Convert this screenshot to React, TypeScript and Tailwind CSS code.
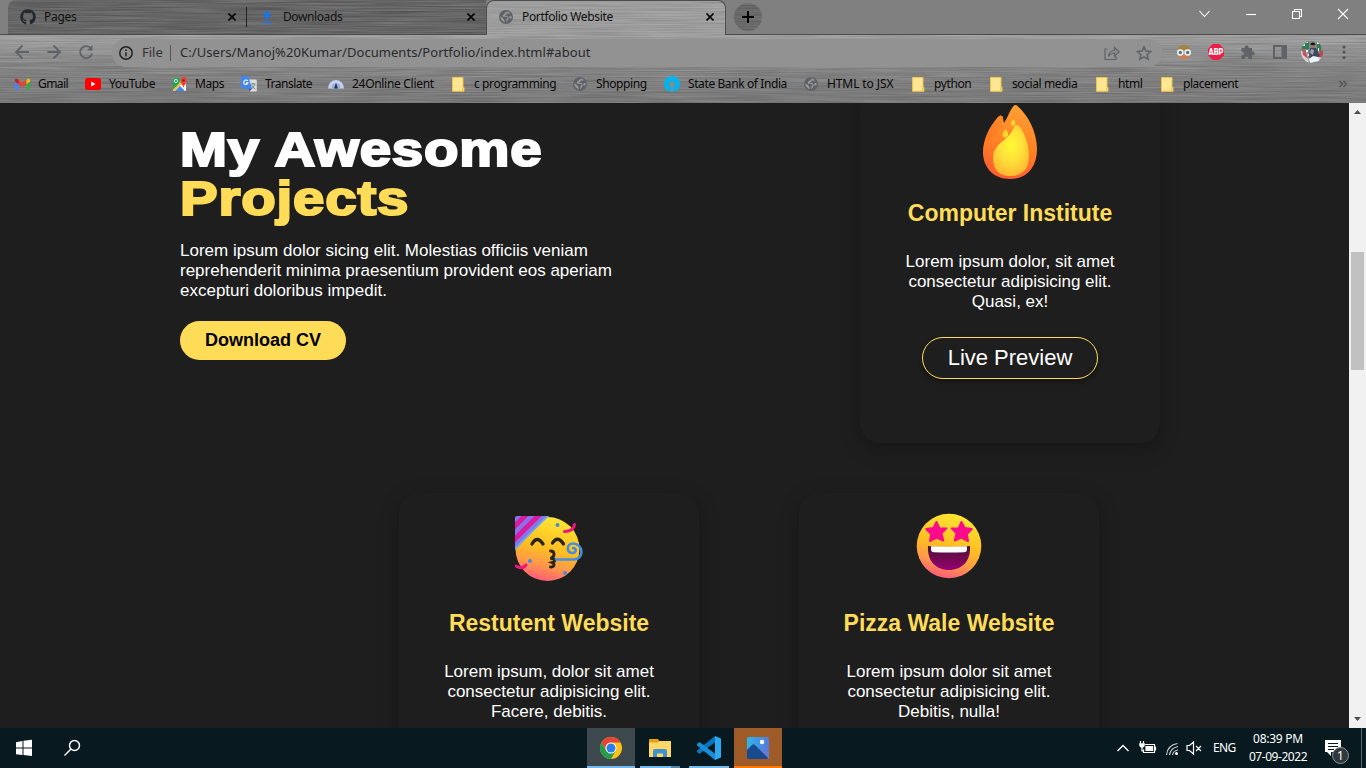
import React from "react";
import { FaGithub } from "react-icons/fa";

function Metal({ id, seed, strength = 0.5 }: { id: string; seed: number; strength?: number }) {
  return (
    <svg className="pointer-events-none absolute inset-0 h-full w-full" aria-hidden="true">
      <filter id={id} x="0" y="0" width="100%" height="100%" colorInterpolationFilters="sRGB">
        <feTurbulence type="fractalNoise" baseFrequency="0.014 0.8" numOctaves="2" seed={seed} />
        <feColorMatrix values="1 0 0 0 0  1 0 0 0 0  1 0 0 0 0  0 0 0 0 1" />
      </filter>
      <rect width="100%" height="100%" filter={`url(#${id})`} opacity={strength} />
    </svg>
  );
}

function Globe({ size = 14 }: { size?: number }) {
  return (
    <svg width={size} height={size} viewBox="0 0 14 14">
      <circle cx="7" cy="7" r="7" fill="#5f6368" />
      <path d="M7.500 1.300 6 3.300 3.800 5.200l.4 1.500 3.300.1 1.200 1.500-1.200 1.300-.3 2.900C3.500 12 1.300 9.500 1.400 6.300L4 8.200 5.300 10l.5 2.200 1.400.3 1.600-2.200 1-1.900L8.300 6 5.500 5.600 7.800 4z" fill="#9a9b9c" />
      <path d="M8.300 1.500 8 3.200q1.800 1.500 2.800-.4zM12.500 6.200q-2.500-.8-2.300 1.300 1 1.500 2.300.8z" fill="#9a9b9c" />
    </svg>
  );
}

function Folder() {
  return (
    <svg width="13" height="15" viewBox="0 0 13 15">
      <path d="M.5.5h10.500v9.800h1v4H.5z" fill="#ffe693" stroke="#efc24d" />
      <path d="M10.500 10.500v3.500" stroke="#efc24d" />
    </svg>
  );
}

function Gmail() {
  return (
    <svg width="15" height="12" viewBox="0 0 15 12">
      <path d="M0 2v9q0 1 1 1h2.500V5z" fill="#4285f4" />
      <path d="M11.500 5v7H14q1 0 1-1V2z" fill="#34a853" />
      <path d="M3.500 1.800v4.500l4 3 4-3V1.800l-4 3z" fill="#ea4335" />
      <path d="M0 2v1.600l3.500 2.700V1.800L2.500 1Q.5-.2 0 2z" fill="#c5221f" />
      <path d="M15 2v1.600l-3.500 2.700V1.800l1-.8Q14.500-.2 15 2z" fill="#fbbc04" />
    </svg>
  );
}

function YouTube() {
  return (
    <svg width="16" height="12" viewBox="0 0 16 12">
      <rect width="16" height="12" rx="2.500" fill="#f00" />
      <path d="M6.300 3.500v5l4.200-2.500z" fill="#fff" />
    </svg>
  );
}

function Maps() {
  return (
    <svg width="16" height="15" viewBox="0 0 16 15">
      <rect x="1" y="1" width="13" height="13" rx="1.500" fill="#e9eef0" />
      <path d="M1 2.500Q1 1 2.500 1H9L7 8l-6 5z" fill="#26a65b" />
      <path d="M1 12.500 8.500 5l1.500 1.500L2.500 14Q1 14 1 12.500z" fill="#fbc12d" />
      <path d="m3 14 5-5 5 5z" fill="#4285f4" />
      <path d="m8.500 8.500 1.500-1.500 4 4v2q0 1-.8 1z" fill="#fff" />
      <circle cx="4" cy="4" r="1.600" fill="none" stroke="#d6f3e1" strokeWidth=".9" />
      <path d="M11.500 11C11 7.500 8.200 6.500 8.200 3.400a3.300 3.300 0 0 1 6.600 0c0 3.100-2.800 4.100-3.300 7.600z" fill="#ea4335" />
      <circle cx="11.500" cy="3.500" r="1.200" fill="#901b16" />
    </svg>
  );
}

function Translate() {
  return (
    <svg width="16" height="16" viewBox="0 0 16 16">
      <path d="M6 3.500h8.500q1.300 0 1.300 1.200v9.500q0 1.300-1.300 1.300H9z" fill="#dcdcdc" />
      <path d="M9.500 8h5M12 6.800V8m1.800 0c-.6 2.500-2 4-4 5m.8-4c.7 1.800 2 3.200 3.800 4" stroke="#667d86" strokeWidth=".9" fill="none" />
      <path d="M1.300 0H7l4 12.500H1.300Q0 12.500 0 11.300v-10Q0 0 1.300 0z" fill="#4285f4" />
      <path d="M7.500 12.500H11l-2.300 3z" fill="#2b5fc0" />
      <path d="M6.700 5a2.200 2.200 0 1 0 .3 1.900H4.900" stroke="#fff" strokeWidth="1.100" fill="none" />
    </svg>
  );
}

function Online() {
  return (
    <svg width="16" height="9" viewBox="0 0 16 9">
      <path d="M0 8.500A8 8.500 0 0 1 16 8.500z" fill="#c5cff0" />
      <path d="M3.500 8.500a4.500 5.500 0 0 1 9 0z" fill="#9eacd8" />
      <path d="m8 3 2 5.500H6z" fill="#26335f" />
    </svg>
  );
}

function Sbi() {
  return (
    <svg width="16" height="16" viewBox="0 0 16 16">
      <circle cx="8" cy="8" r="8" fill="#00b5ef" />
      <circle cx="8" cy="8" r="2.700" fill="#8a8a8a" />
      <path d="M7 8h2v8H7z" fill="#8a8a8a" />
    </svg>
  );
}

const bookmarks: { w: string; iw: string; icon: React.ReactNode; label: string; track: string }[] = [
  { w: "w-[70px]", iw: "w-[23px]", icon: <Gmail />, label: "Gmail", track: "tracking-[-0.6px]" },
  { w: "w-[87px]", iw: "w-[24px]", icon: <YouTube />, label: "YouTube", track: "tracking-[-0.35px]" },
  { w: "w-[69px]", iw: "w-[23px]", icon: <Maps />, label: "Maps", track: "tracking-[-0.4px]" },
  { w: "w-[87px]", iw: "w-[24px]", icon: <Translate />, label: "Translate", track: "tracking-[-0.5px]" },
  { w: "w-[124px]", iw: "w-[24px]", icon: <Online />, label: "24Online Client", track: "tracking-[-0.3px]" },
  { w: "w-[121px]", iw: "w-[22px]", icon: <Folder />, label: "c programming", track: "tracking-[-0.4px]" },
  { w: "w-[91px]", iw: "w-[23px]", icon: <Globe />, label: "Shopping", track: "tracking-[-0.4px]" },
  { w: "w-[140px]", iw: "w-[24px]", icon: <Sbi />, label: "State Bank of India", track: "tracking-[-0.4px]" },
  { w: "w-[108px]", iw: "w-[23px]", icon: <Globe />, label: "HTML to JSX", track: "tracking-[-0.1px]" },
  { w: "w-[78px]", iw: "w-[22px]", icon: <Folder />, label: "python", track: "tracking-[-0.4px]" },
  { w: "w-[106px]", iw: "w-[22px]", icon: <Folder />, label: "social media", track: "tracking-[-0.4px]" },
  { w: "w-[65px]", iw: "w-[22px]", icon: <Folder />, label: "html", track: "tracking-[-0.4px]" },
  { w: "w-[90px]", iw: "w-[22px]", icon: <Folder />, label: "placement", track: "tracking-[-0.5px]" },
];

function Close() {
  return (
    <svg width="8" height="8" viewBox="0 0 8 8" className="shrink-0">
      <path d="m.5.5 7 7m0-7-7 7" stroke="#000" strokeWidth="1.600" />
    </svg>
  );
}

function TabStrip() {
  return (
    <div className="relative flex h-[34px] shrink-0 bg-[#808080] text-[12px] tracking-[-0.3px] text-[#111]">
      <div className="w-2 rounded-br-md" />
      <div className="relative flex w-[478px] overflow-hidden rounded-tl-lg bg-[#606060]">
        <Metal id="m-tabs" seed={4} strength={0.2} />
        <div className="relative flex w-[239px] shrink-0 items-center pl-3">
          <FaGithub size={16} color="#24292f" />
          <span className="ml-2 flex-1">Pages</span>
          <Close />
          <div className="ml-[10px] h-5 w-px bg-[#222]" />
        </div>
        <div className="relative flex w-[240px] shrink-0 items-center pl-[15px]">
          <svg width="10" height="12" viewBox="0 0 10 12">
            <path d="M3 0h4v4h2.500L5 8.500.5 4H3zM0 10.500h10V12H0z" fill="#1a73e8" />
          </svg>
          <span className="ml-[11px] flex-1 tracking-[-0.4px]">Downloads</span>
          <Close />
          <div className="w-3" />
        </div>
      </div>
      <div className="relative z-10 flex h-[35px] w-[240px] items-center overflow-hidden rounded-t-lg border border-b-0 border-[#4d4d4d] bg-[#a3a3a3] pb-[2px]">
        <Metal id="m-active" seed={9} strength={0.16} />
        <div className="relative flex w-full items-center pl-3 pr-[11px]">
          <Globe />
          <span className="ml-[9px] flex-1 whitespace-nowrap tracking-[-0.35px]">Portfolio Website</span>
          <Close />
        </div>
      </div>
      <div className="relative ml-[8px] mt-[3px] flex h-7 w-7 items-center justify-center overflow-hidden rounded-full bg-[#666]">
        <Metal id="m-plus" seed={2} strength={0.15} />
        <svg width="12" height="12" viewBox="0 0 12 12" className="relative">
          <path d="M6 0v12M0 6h12" stroke="#000" strokeWidth="2" />
        </svg>
      </div>
      <svg width="150" height="14" viewBox="0 0 150 14" className="ml-auto mr-[17px] mt-[7px]" fill="none" stroke="#fff" strokeWidth="1.100">
        <path d="m.5 4 5 5.500L10.500 4" />
        <path d="M47 7.500h10" />
        <path d="M93.500 4.500h7v7h-7zM95.500 4.500v-2h7v7h-2" />
        <path d="m139 2 10 10m0-10-10 10" />
      </svg>
    </div>
  );
}

function Toolbar() {
  return (
    <div className="relative flex h-[69px] shrink-0 flex-col border-t border-[#4d4d4d] bg-linear-to-b from-[#a6a6a6] via-[#868686] via-45% to-[#787878]">
      <Metal id="m-bar" seed={15} strength={0.18} />
      <div className="relative flex h-[34px] items-center">
        <svg width="112" height="34" viewBox="0 0 112 34" fill="none" stroke="#5f6368" strokeWidth="1.800">
          <path d="M29 17H16m6.500-6.500L16 17l6.500 6.500M47.500 17H60m-6.500-6.500L60 17l-6.500 6.500M91 13.500A6 6 0 1 0 92 18.500" />
          <path d="M92.500 10v5.500H87z" fill="#5f6368" stroke="none" />
        </svg>
        <div className="mt-px flex h-7 w-[1050px] items-center rounded-full bg-[#929292] pl-[7px] text-[14px] text-[#333]">
          <svg width="14" height="14" viewBox="0 0 14 14" fill="none" stroke="#222" strokeWidth="1.500">
            <circle cx="7" cy="7" r="6.200" />
            <path d="M7 6.200v4.300M7 3.300v1.600" />
          </svg>
          <span className="ml-[9px] w-[28px] text-[13px]">File</span>
          <div className="h-4 w-px bg-[#555]" />
          <span className="ml-[9px] whitespace-nowrap text-[13px] tracking-[0.05px] text-[#292a2d]">C:/Users/Manoj%20Kumar/Documents/Portfolio/index.html#about</span>
          <svg width="50" height="16" viewBox="0 0 50 16" className="ml-auto mr-[8px]" fill="none" stroke="#5f6368" strokeWidth="1.200">
            <path d="M3.500 4H1v10.500h11V11M4.500 11.500c.5-4 3-6 6-6V2.500l4.500 4.300-4.500 4.300V8c-2.500 0-4.500 1-6 3.500z" />
            <path d="m40 1.800 1.900 4.300 4.700.5-3.500 3.100 1 4.600-4.100-2.400-4.100 2.400 1-4.600-3.500-3.100 4.700-.5z" strokeWidth="1.500" />
          </svg>
        </div>
        <svg width="204" height="34" viewBox="1162 35 204 34">
          <g>
            <circle cx="1184" cy="53" r="6.700" fill="#c98158" />
            <path d="M1177.300 50q1-5 6.700-5t6.700 5z" fill="#a48348" />
            <circle cx="1180.300" cy="52.500" r="2.500" fill="#4b7280" stroke="#eaf6fa" strokeWidth="1.600" />
            <circle cx="1187.700" cy="52.500" r="2.500" fill="#4b7280" stroke="#eaf6fa" strokeWidth="1.600" />
          </g>
          <path d="m1212.700 44 6.600 0 4.700 4.700v6.600l-4.700 4.700h-6.600l-4.700-4.700v-6.600z" fill="#ed1e45" />
          <text x="1216" y="55" textAnchor="middle" fontSize="8.500" fontWeight="900" fill="#fff" fontFamily="Roboto, sans-serif" textLength="15" lengthAdjust="spacingAndGlyphs">ABP</text>
          <path d="M1241.500 48h3.300v-.8a1.900 1.900 0 0 1 3.800 0v.8h3.400v3.500h.8a1.900 1.900 0 0 1 0 3.800h-.8v3.700h-3.700v-.8a1.700 1.700 0 0 0-3.400 0v.8h-3.400v-3.700h.8a1.700 1.700 0 0 0 0-3.500h-.8z" fill="#5f6368" />
          <path d="M1273 45h14v14h-14zM1275 47v10h6.500V47z" fill="#5f6368" fillRule="evenodd" />
          <clipPath id="avatar"><circle cx="1312" cy="52" r="11" /></clipPath>
          <g clipPath="url(#avatar)">
            <path d="M1301 41h22v22h-22z" fill="#7c8a88" />
            <path d="M1301 41h8v8h-8zM1317 43h4v8h-4z" fill="#2c7f55" />
            <path d="M1301 51h6l2 12h-8zM1318 56h6v7h-7z" fill="#d9cfd4" />
            <path d="M1302 48l4 3 2 8-5-4z" fill="#bf5860" />
            <path d="M1320 50l4 2-2 6-3-1z" fill="#c24550" />
            <path d="M1310 48h6l4 8-6 4-5-3z" fill="#3f475c" />
            <path d="m1311 49 3 1-1 5-3-2z" fill="#9aa3b6" />
            <circle cx="1313" cy="46" r="2.300" fill="#9b6f59" />
            <path d="M1310.500 45q0-3 2.500-2.500t2.500 2.500z" fill="#10151b" />
            <path d="M1309 59l4-3 5 1 1 4-9 2z" fill="#eef5fb" />
            <path d="M1303 44h2v2h-2zM1317 42h2v2h-2zM1306 50h2v2h-2zM1306 42h2v1h-2zM1308 54h1v2h-1zM1318 48h1v3h-1z" fill="#eee" />
          </g>
          <g fill="#4f5358"><circle cx="1344" cy="47" r="1.500" /><circle cx="1344" cy="52" r="1.500" /><circle cx="1344" cy="57.500" r="1.500" /></g>
        </svg>
      </div>
      <div className="relative flex h-[30px] items-center pl-[15px] text-[12px] text-[#080808]">
        {bookmarks.map((b) => (
          <div key={b.label} className={`flex shrink-0 items-center ${b.w}`}>
            <span className={`shrink-0 ${b.iw}`}>{b.icon}</span>
            <span className={`whitespace-nowrap ${b.track}`}>{b.label}</span>
          </div>
        ))}
        <svg width="8" height="8" viewBox="0 0 8 8" className="ml-auto mr-[19px]" fill="none" stroke="#4f5358" strokeWidth="1.300">
          <path d="m.5 1 3 3-3 3m4-6 3 3-3 3" />
        </svg>
      </div>
    </div>
  );
}

function Fire() {
  return (
    <svg width="56" height="76" viewBox="0 0 56 76">
      <defs>
        <linearGradient id="fo" x1=".6" y1="0" x2=".4" y2="1"><stop offset="0" stopColor="#ffa034" /><stop offset=".55" stopColor="#ff8024" /><stop offset="1" stopColor="#ff5b33" /></linearGradient>
        <radialGradient id="fi" cx=".5" cy=".4" r=".62"><stop offset="0" stopColor="#fff833" /><stop offset=".5" stopColor="#ffe13a" /><stop offset="1" stopColor="#ffb830" /></radialGradient>
        <linearGradient id="fs" x1="0" y1="0" x2="1" y2="0"><stop offset="0" stopColor="#ff6a22" /><stop offset="1" stopColor="#ff8a26" /></linearGradient>
      </defs>
      <path d="M22 19C25 15 28 6 31.500 2q2-2 4 0C46 11 55 28 55 45c0 19-11 30-27 30S1 64 1 48c0-12 6-25 15-35q3-3 5 0-1 3 1 6z" fill="url(#fo)" />
      <path d="M3 39C10 32 19 27 22 19l-1-6q-2-3-5 0C10 20 5 31 3 39z" fill="url(#fs)" opacity=".7" />
      <path d="M32 23q3-4 6 0c5 7 9 18 9 30 0 12-7 19-18.500 19S11 66 11 54c0-15 17-18 21-31z" fill="url(#fi)" />
      <path d="M24 25c-5 5-4 8-1 8.500 4 0 4-4 1-8.500zM31 16c-3 3-3 5 0 6 3 0 3-4 1-6z" fill="#ffd42d" />
    </svg>
  );
}

function FaceGradient({ id }: { id: string }) {
  return (
    <defs>
      <linearGradient id={id} x1=".65" y1="0" x2=".4" y2="1"><stop offset="0" stopColor="#ffe733" /><stop offset=".5" stopColor="#ffbd22" /><stop offset=".75" stopColor="#ff9a48" /><stop offset="1" stopColor="#ff5b78" /></linearGradient>
    </defs>
  );
}

function Party() {
  return (
    <svg width="68" height="66" viewBox="0 0 68 66" fill="none" strokeLinecap="round">
      <FaceGradient id="pf" />
      <circle cx="32.500" cy="33" r="32" fill="url(#pf)" />
      <clipPath id="hat"><path d="M2 0h32Q18 15 0 34Q0 18 0 2Q0 0 2 0z" /></clipPath>
      <g clipPath="url(#hat)">
        <path d="M0 0h36v36H0z" fill="#8a72ee" />
        <path d="M-2 12 12-2M-2 25 25-2" stroke="#d91c9d" strokeWidth="5" />
        <path d="M-2 36 36-2" stroke="#62aef3" strokeWidth="4" />
      </g>
      <path d="M17 28q5-9 11 0M37.500 27q5-8 11 1" stroke="#27231f" strokeWidth="3.300" />
      <path d="M35.500 35c4.500 0 5 5.500 0 7.500 5.500 0 5.500 3 1.500 4 3.500 1.500 2 5-1.500 4.500" stroke="#27231f" strokeWidth="2.800" />
      <path d="M41 43.500h18c11-1 9-16-1-16-7 0-7 10 0 9.500 4-1 3-5 0-5" stroke="#438de2" strokeWidth="2.600" />
      <path d="M49.500 15.500q9 0 10-7M1 50q6 4 10-1" stroke="#ef147f" strokeWidth="3" />
      <circle cx="42.500" cy="9" r="2" fill="#428de0" /><circle cx="15" cy="45" r="2" fill="#428de0" /><circle cx="50" cy="57" r="2" fill="#428de0" />
    </svg>
  );
}

function StarEyes() {
  const star = "M0-10 2.800-3.800l7 .2-4.800 5L6.800 8.500 0 5.500-6.500 9-5.300 2-10.300-3-3-4z";
  return (
    <svg width="66" height="66" viewBox="0 0 66 66">
      <FaceGradient id="sf" />
      <linearGradient id="mouth" x1="0" y1="0" x2="0" y2="1"><stop offset="0" stopColor="#481230" /><stop offset="1" stopColor="#990072" /></linearGradient>
      <circle cx="33" cy="33" r="32.300" fill="url(#sf)" />
      <g fill="#fa0b8c" stroke="#fa0b8c" strokeWidth="2" strokeLinejoin="round">
        <path d={star} transform="translate(20.500 19)" /><path d={star} transform="translate(45.500 19) scale(-1 1)" />
      </g>
      <path d="M12 33q21 2 42 0c1 15-8 24-21 24S11 48 12 33z" fill="url(#mouth)" />
      <path d="M15 33.300q18 .8 36 0v3q0 3-3 3-15 .6-30 0-3 0-3-3z" fill="#fff" />
    </svg>
  );
}

function Card({ art, title, lines, preview }: { art: React.ReactNode; title: string; lines: string[]; preview?: boolean }) {
  return (
    <article className="flex h-[360px] w-[300px] shrink-0 flex-col items-center rounded-[20px] bg-[#1e1e1e] text-center shadow-[0_6px_20px_rgba(0,0,0,0.28)]">
      <div className="flex h-[103px] items-center justify-center">{art}</div>
      <h2 className="mt-[13px] whitespace-nowrap text-[23px] leading-[28px] font-bold text-[#ffdc58]">{title}</h2>
      <p className="mt-[25px] text-[17px] leading-[20px] text-white">
        {lines.map((l) => (
          <span key={l} className="block whitespace-nowrap">{l}</span>
        ))}
      </p>
      {preview && (
        <button className="mt-[25px] h-[42px] w-[176px] shrink-0 rounded-full border border-[#ffdc58] text-[22px] leading-none whitespace-nowrap text-white shadow-[0_3px_5px_rgba(0,0,0,0.35)]">Live Preview</button>
      )}
    </article>
  );
}

function Page() {
  return (
    <main className="flex min-h-0 flex-1 bg-[#1e1e1e] font-['Liberation_Sans',Arial,sans-serif]">
      <div className="flex min-w-0 flex-1 flex-col overflow-hidden">
        <div className="flex h-[390px] shrink-0 justify-between pl-[180px] pr-[189px]">
          <section className="pt-[22px]">
            <h1 className="w-[320px] origin-left scale-x-[1.15] text-[49px] leading-[49px] font-bold tracking-[0.75px] whitespace-nowrap text-white">
              <span className="block [-webkit-text-stroke:2.2px_#fff]">My Awesome</span>
              <span className="block text-[#ffdc58] [-webkit-text-stroke:2.2px_#ffdc58]">Projects</span>
            </h1>
            <p className="mt-[18px] text-[17px] leading-[20px] text-white">
              <span className="block">Lorem ipsum dolor sicing elit. Molestias officiis veniam</span>
              <span className="block">reprehenderit minima praesentium provident eos aperiam</span>
              <span className="block">excepturi doloribus impedit.</span>
            </p>
            <button className="mt-[20px] h-[39px] w-[166px] rounded-full bg-[#ffdc58] text-[18px] font-bold whitespace-nowrap text-black">Download CV</button>
          </section>
          <div className="-mt-[20px]">
            <Card art={<div className="mt-[15px]"><Fire /></div>} title="Computer Institute" lines={["Lorem ipsum dolor, sit amet", "consectetur adipisicing elit.", "Quasi, ex!"]} preview />
          </div>
        </div>
        <div className="flex gap-[100px] pl-[399px]">
          <Card art={<div className="mt-[8px]"><Party /></div>} title="Restutent Website" lines={["Lorem ipsum, dolor sit amet", "consectetur adipisicing elit.", "Facere, debitis."]} />
          <Card art={<div className="mt-[2px]"><StarEyes /></div>} title="Pizza Wale Website" lines={["Lorem ipsum dolor sit amet", "consectetur adipisicing elit.", "Debitis, nulla!"]} />
        </div>
      </div>
      <div className="flex w-[17px] shrink-0 flex-col items-center bg-[#f1f1f1]">
        <svg width="7" height="4" viewBox="0 0 7 4" className="mt-[7px]"><path d="M0 4 3.500 0 7 4z" fill="#505050" /></svg>
        <div className="mt-[138px] h-[118px] w-[13px] bg-[#c1c1c1]" />
        <svg width="7" height="4" viewBox="0 0 7 4" className="mt-auto mb-[7px]"><path d="M0 0h7L3.500 4z" fill="#505050" /></svg>
      </div>
    </main>
  );
}

function Taskbar() {
  return (
    <footer className="flex h-10 shrink-0 bg-[#08191f] text-white">
      <svg width="100" height="40" viewBox="0 0 100 40">
        <path d="M16 14.200 22.500 13v6.500H16zM23.500 12.800 32 11.800v7.700h-8.500zM16 20.500h6.500V27L16 26.200zM23.500 20.500H32V28l-8.500-.9z" fill="#fff" />
        <g fill="none" stroke="#fff" strokeWidth="1.500"><circle cx="74.500" cy="17.500" r="5" /><path d="m71 21-6.500 6.500" /></g>
      </svg>
      <div className="ml-[487px] flex">
        <div className="flex w-12 items-center justify-center border-b-2 border-[#76b9ed] bg-[#3c484d] pt-[2px]">
          <svg width="22" height="22" viewBox="0 0 22 22">
            <circle cx="11" cy="11" r="11" fill="#fbc116" />
            <path d="M1.470 5.500A11 11 0 0 1 20.530 5.500H11a5.500 5.500 0 0 0-4.760 8.250z" fill="#ea4335" />
            <path d="M1.470 5.500A11 11 0 0 0 11 22l4.760-8.250H6.240z" fill="#249c4b" />
            <circle cx="11" cy="11" r="5.500" fill="#fff" /><circle cx="11" cy="11" r="4.500" fill="#2f7de9" />
          </svg>
        </div>
        <div className="ml-[5px] flex w-10 flex-col">
          <div className="flex flex-1 items-center justify-center pt-[2px]">
            <svg width="22" height="19" viewBox="0 0 22 19">
              <path d="M0 1q0-1 1-1h8l1.500 2H21q1 0 1 1v15H0z" fill="#e7a010" /><path d="M0 3.500h9L10.500 2H22v16H0z" fill="#ffd766" />
              <path d="M4 18v-6q0-2 2-2h10q2 0 2 2v6h-4v-3.500H8V18z" fill="#3f92d2" />
            </svg>
          </div>
          <div className="flex h-[2px]"><div className="w-[31px] bg-[#76b9ed]" /><div className="w-[9px] bg-[#5485aa]" /></div>
        </div>
        <div className="ml-[9px] flex w-10 items-center justify-center border-b-2 border-[#76b9ed] pt-[2px]">
          <svg width="24" height="24" viewBox="0 0 24 24">
            <path d="M18 0v6.300L2.500 18 0 16v-1.500z" fill="#0876bc" /><path d="M2.500 6 18 17.700V24L0 9.500V8z" fill="#168fd5" /><path d="m18 0 6 2.500v19L18 24z" fill="#2aa8f2" />
          </svg>
        </div>
        <div className="ml-[5px] flex w-12 items-center justify-center border-b-2 border-[#ff7800] bg-[#9f5b27] pt-[2px]">
          <svg width="22" height="22" viewBox="0 0 22 22">
            <defs><linearGradient id="sky"><stop stopColor="#2db5ec" /><stop offset="1" stopColor="#5679dc" /></linearGradient></defs>
            <rect width="22" height="22" rx="1.500" fill="url(#sky)" />
            <path d="M8 20 16 12q1-1 2 0l4 4v6H8z" fill="#697bd0" /><path d="M0 13l5-5q1.500-1.500 3 0l13 13q0 1-1 1H1q-1 0-1-1z" fill="#174b8e" /><circle cx="15" cy="5" r="2.200" fill="#fff" />
          </svg>
        </div>
      </div>
      <div className="ml-auto flex items-center text-[12px]">
        <svg width="90" height="40" viewBox="1115 728 90 40" fill="none" stroke="#fff" strokeWidth="1.200">
          <path d="m1117.500 751 5.500-5.500 5.500 5.500" strokeWidth="1.400" />
          <path d="M1145 744.500h9.500v8h-11v-3M1155.500 746.500v4" /><path d="M1146 746.500h6.500v4h-6.500z" fill="#fff" />
          <path d="M1140.500 741v2.500m3-2.500v2.500M1142 747v4h1.500" /><path d="M1139.500 743.500h5v2q-.5 2-2.500 2t-2.500-2z" fill="#fff" strokeWidth=".5" />
          <path d="M1166.500 755q1-10 11-11.500M1169.500 755q1-7 8.500-8.500M1172.500 755q.5-4 5.500-5" stroke="#c6cccd" /><circle cx="1176.500" cy="753.500" r="1.500" fill="#fff" stroke="none" />
          <path d="M1187 745.500h2.500l4-3.500v12l-4-3.500h-2.500zM1196 746l5 5m0-5-5 5" />
        </svg>
        <span className="ml-[8px] w-[31px] tracking-[-0.6px]">ENG</span>
        <div className="flex w-[68px] flex-col items-center whitespace-nowrap text-[12px] leading-[18px] tracking-[-0.45px]">
          <span className="tracking-[-0.25px]">08:39 PM</span><span>07-09-2022</span>
        </div>
        <svg width="54" height="40" viewBox="1312 728 54 40">
          <path d="M1325 740h16v12h-10v4l-4-4h-2z" fill="#fff" /><path d="M1328 743.500h10M1328 746.500h10M1328 749.500h6" stroke="#08191f" />
          <circle cx="1340.500" cy="755.500" r="8" fill="#30383c" stroke="#8b9599" />
          <text x="1340.500" y="759.500" fontSize="12" textAnchor="middle" fill="#fff" fontFamily="Noto Sans, sans-serif">1</text>
          <path d="M1361.500 728v40" stroke="#58656a" />
        </svg>
      </div>
    </footer>
  );
}

export default function App() {
  return (
    <div className="flex h-[768px] w-[1366px] flex-col overflow-hidden font-['Noto_Sans','Open_Sans',sans-serif]">
      <TabStrip />
      <Toolbar />
      <Page />
      <Taskbar />
    </div>
  );
}
